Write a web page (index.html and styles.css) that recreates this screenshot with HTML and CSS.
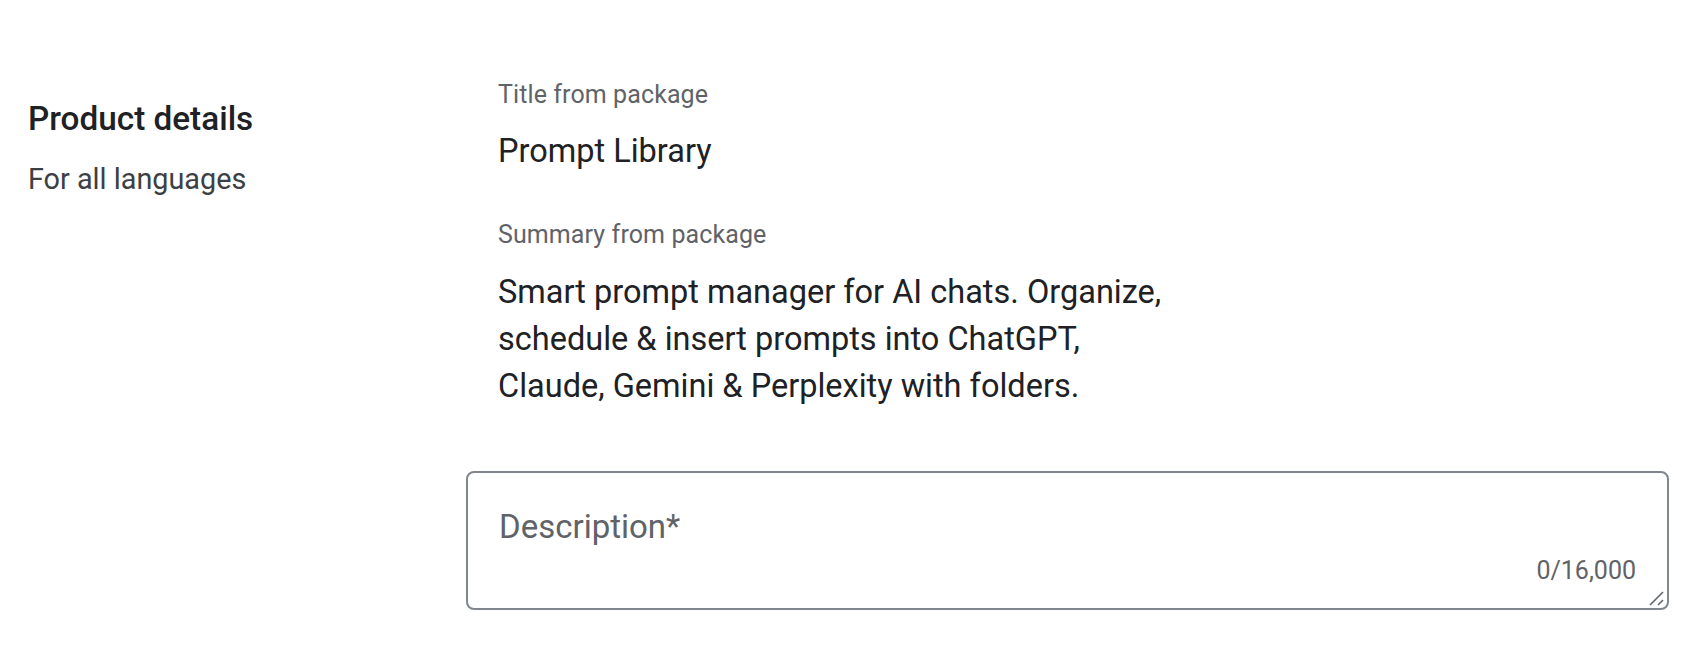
FILE: index.html
```html
<!DOCTYPE html>
<html lang="en">
<head>
<meta charset="utf-8">
<title>Product details</title>
<link rel="stylesheet" href="styles.css">
</head>
<body>
<main class="section">
  <div class="section-head">
    <h2 class="section-title">Product details</h2>
    <p class="section-sub">For all languages</p>
  </div>
  <div class="section-body">
    <div class="field-info">
      <div class="info-label">Title from package</div>
      <div class="info-value">Prompt Library</div>
    </div>
    <div class="field-info field-info--summary">
      <div class="info-label">Summary from package</div>
      <div class="info-value info-value--wrap">Smart prompt manager for AI chats. Organize, schedule &amp; insert prompts into ChatGPT, Claude, Gemini &amp; Perplexity with folders.</div>
    </div>
    <div class="textbox">
      <div class="textbox-placeholder">Description*</div>
      <div class="textbox-counter">0/16,000</div>
      <svg class="textbox-grip" width="16" height="16" viewBox="0 0 16 16" aria-hidden="true">
        <line x1="1" y1="14" x2="14" y2="1" />
        <line x1="9" y1="14" x2="14" y2="9" />
      </svg>
    </div>
  </div>
</main>
</body>
</html>
```
FILE: styles.css
```css
html, body {
  margin: 0;
  padding: 0;
  background: #ffffff;
}

body {
  font-family: Roboto, "Liberation Sans", Arial, sans-serif;
  color: #202124;
}

.section {
  display: flex;
  padding: 0 29px 0 28px;
}

.section-head {
  width: 438px;
  flex: none;
  padding-top: 99px;
}

.section-title {
  margin: 0;
  font-family: Roboto, "Liberation Sans", sans-serif;
  font-weight: 500;
  font-size: 33.3px;
  line-height: 40px;
  color: #202124;
}

.section-sub {
  margin: 20px 0 0;
  font-size: 28.8px;
  line-height: 40px;
  color: #3c4043;
}

.section-body {
  flex: 1;
  padding-top: 79px;
}

.field-info {
  padding-left: 32px;
}

.field-info--summary {
  margin-top: 44px;
}

.info-label {
  font-size: 25px;
  line-height: 32px;
  letter-spacing: 0.1px;
  color: #5f6368;
}

.info-value {
  margin-top: 16px;
  font-size: 32.5px;
  line-height: 48px;
  color: #202124;
}

.info-value--wrap {
  margin-top: 18px;
  line-height: 47px;
  max-width: 690px;
}

.textbox {
  position: relative;
  box-sizing: border-box;
  margin-top: 61px;
  height: 139px;
  border: 2px solid #80868b;
  border-radius: 8px;
  padding: 30px 31px 0 31px;
  display: flex;
  flex-direction: column;
}

.textbox-placeholder {
  font-size: 33px;
  line-height: 48px;
  color: #5f6368;
}

.textbox-counter {
  align-self: flex-end;
  margin-top: 4px;
  font-size: 25px;
  line-height: 32px;
  color: #5f6368;
}

.textbox-grip {
  position: absolute;
  right: 2px;
  bottom: 1px;
  stroke: #5f6368;
  stroke-width: 1.6;
}
```
